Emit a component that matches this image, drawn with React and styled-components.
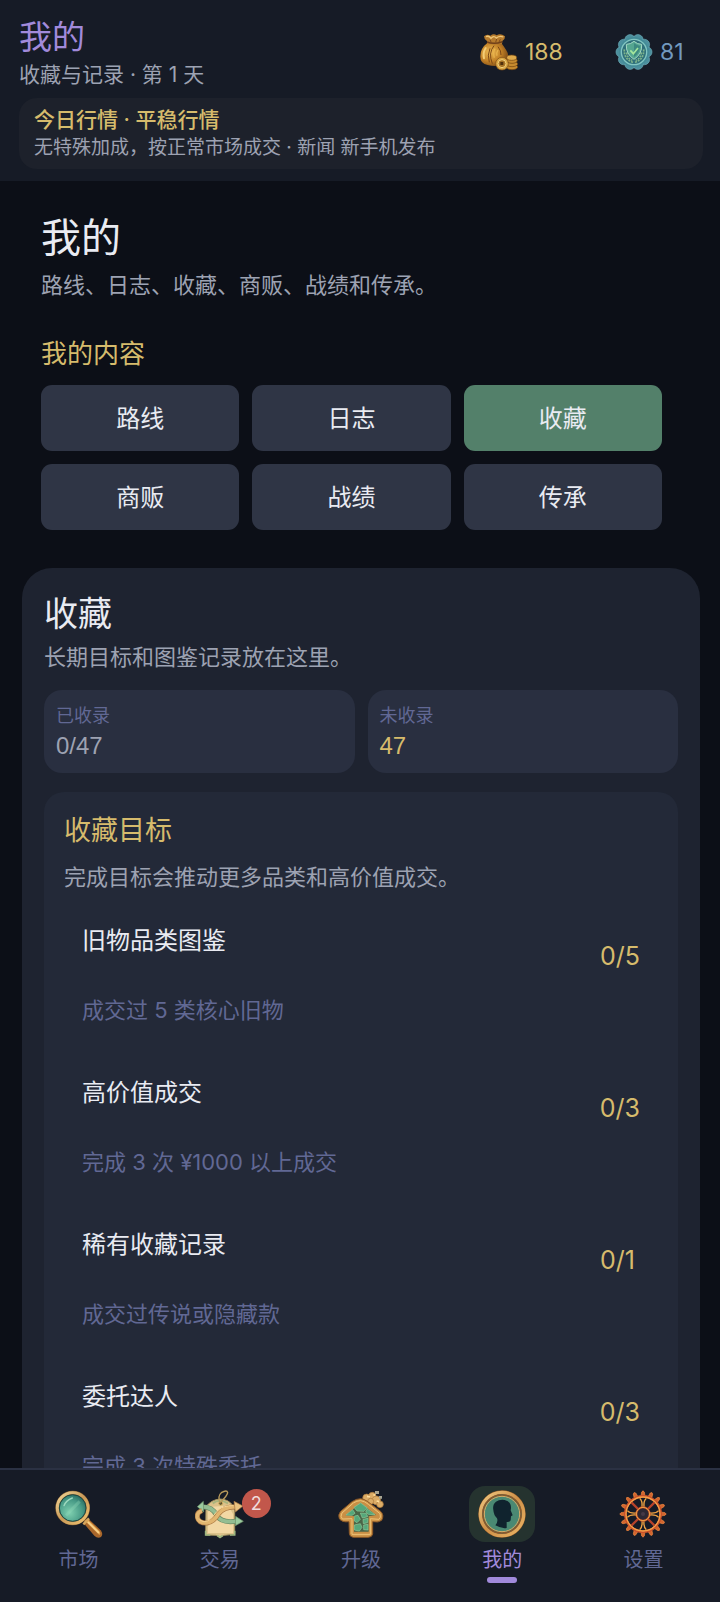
import React, { useState } from "react";
import styled, { createGlobalStyle, css } from "styled-components";

const color = {
  page: "#0c0f17",
  bar: "#161b26",
  banner: "#1d212b",
  card: "#1e2330",
  inner: "#232938",
  tile: "#292f40",
  button: "#2f3545",
  green: "#53806a",
  line: "#2b3143",
  white: "#e9ebf2",
  muted: "#9da2b2",
  dim: "#616894",
  gold: "#d6bb6c",
  blue: "#7299bf",
  purple: "#a18adb",
  red: "#c2574b",
};

const mixedFont = '"Inter", "Noto Sans CJK SC", sans-serif';

const GlobalStyle = createGlobalStyle`
  * { box-sizing: border-box; }
  body {
    margin: 0;
    background: ${color.page};
    color: ${color.white};
    font-family: "Noto Sans CJK SC", "Noto Sans", sans-serif;
  }
  h1, h2, h3, p, ul, dl, dt, dd { margin: 0; padding: 0; font-weight: 400; }
  ul { list-style: none; }
`;

const Shell = styled.div`
  display: flex;
  flex-direction: column;
  height: 100vh;
`;

const Header = styled.header`
  padding: 14px 17px 12px 19px;
  background: ${color.bar};
`;

const HeaderRow = styled.div`
  display: flex;
  justify-content: space-between;
  align-items: flex-start;
`;

const ScreenName = styled.p`
  font-size: 33px;
  line-height: 42px;
  color: ${color.purple};
`;

const ScreenNote = styled.p`
  margin-top: 5px;
  font-family: ${mixedFont};
  font-size: 21px;
  line-height: 28px;
  color: ${color.muted};
`;

const Wallet = styled.div`
  display: flex;
  gap: 12px;
  padding-top: 19px;
`;

const Balance = styled.div`
  display: flex;
  align-items: center;
  gap: 7px;
  min-width: ${(p) => p.$width}px;
  font-family: ${mixedFont};
  font-size: 23px;
  line-height: 38px;
  color: ${(p) => p.$color};
`;

const Banner = styled.section`
  margin-top: 9px;
  padding: 8px 15px 7px;
  border-radius: 18px;
  background: ${color.banner};
  font-family: ${mixedFont};
  font-size: 19px;
  line-height: 28px;
  color: ${color.muted};
`;

const BannerTitle = styled.p`
  font-size: 21px;
  font-weight: 500;
  color: ${color.gold};
`;

const Main = styled.main`
  flex: 1;
  min-height: 0;
  overflow-y: auto;
  scrollbar-width: none;
  padding: 30px 20px 24px 22px;
`;

const Intro = styled.section`
  padding: 0 38px 0 19px;
`;

const PageTitle = styled.h1`
  font-size: 40px;
  line-height: 48px;
`;

const Description = styled.p`
  margin-top: ${(p) => p.$gap}px;
  font-size: 22px;
  line-height: 32px;
  color: ${color.muted};
`;

const SectionLabel = styled.h2`
  margin-top: 35px;
  font-size: 26px;
  line-height: 36px;
  color: ${color.gold};
`;

const TabGrid = styled.div`
  display: grid;
  grid-template-columns: repeat(3, 1fr);
  gap: 13px;
  margin-top: 15px;
`;

const TabButton = styled.button`
  height: 66px;
  padding: 0 0 3px;
  border: 0;
  border-radius: 11px;
  background: ${(p) => (p.$active ? color.green : color.button)};
  color: ${color.white};
  font: inherit;
  font-size: 24px;
  cursor: pointer;
`;

const Card = styled.section`
  margin-top: 38px;
  padding: 22px;
  border-radius: 30px;
  background: ${color.card};
`;

const CardTitle = styled.h2`
  font-size: 34px;
  line-height: 44px;
`;

const Tiles = styled.dl`
  display: grid;
  grid-template-columns: 1fr 1fr;
  gap: 13px;
  margin-top: 19px;
`;

const Tile = styled.div`
  padding: 11px 12px 8px;
  border-radius: 18px;
  background: ${color.tile};
`;

const TileLabel = styled.dt`
  font-size: 18px;
  line-height: 26px;
  color: ${color.dim};
`;

const TileValue = styled.dd`
  font-family: "Liberation Sans", sans-serif;
  font-size: 24px;
  line-height: 38px;
  color: ${(p) => (p.$gold ? color.gold : color.muted)};
`;

const GoalPanel = styled.section`
  margin-top: 19px;
  padding: 19px 20px 20px;
  border-radius: 20px;
  background: ${color.inner};
`;

const GoalHeading = styled.h3`
  font-size: 27px;
  line-height: 36px;
  color: ${color.gold};
`;

const GoalList = styled.ul`
  display: flex;
  flex-direction: column;
  gap: 12px;
  margin-top: 12px;
`;

const GoalRow = styled.li`
  display: flex;
  justify-content: space-between;
  padding: 18px 18px 16px;
`;

const GoalName = styled.p`
  font-size: 24px;
  line-height: 36px;
`;

const GoalHint = styled.p`
  margin-top: 36px;
  font-family: ${mixedFont};
  font-size: 22px;
  line-height: 34px;
  color: ${color.dim};
`;

const GoalCount = styled.span`
  min-width: 40px;
  font-family: ${mixedFont};
  font-size: 25px;
  line-height: 71px;
  color: ${color.gold};
`;

const Nav = styled.nav`
  display: flex;
  padding: 16px 6px 19px 8px;
  border-top: 2px solid ${color.line};
  background: ${color.bar};
`;

const NavItem = styled.a`
  flex: 1;
  display: flex;
  flex-direction: column;
  align-items: center;
  text-decoration: none;
  font-size: 20px;
  line-height: 28px;
  color: ${color.dim};
  ${(p) => p.$active && css`color: ${color.purple};`}
`;

const NavIcon = styled.span`
  position: relative;
  display: flex;
  align-items: center;
  justify-content: center;
  width: 66px;
  height: 56px;
  margin-bottom: 3px;
  border-radius: 16px;
  background: ${(p) => (p.$active ? "#25332f" : "transparent")};
`;

const NavMark = styled.span`
  width: 30px;
  height: 6px;
  margin-top: 4px;
  border-radius: 3px;
  background: ${(p) => (p.$active ? color.purple : "transparent")};
`;

const Badge = styled.span`
  position: absolute;
  top: 3px;
  left: 55px;
  width: 29px;
  height: 29px;
  border-radius: 50%;
  background: ${color.red};
  color: #f0dcdc;
  font-family: ${mixedFont};
  font-size: 18px;
  line-height: 29px;
  text-align: center;
`;

function CoinIcon() {
  return (
    <svg width="38" height="38" viewBox="120 98 114 114" aria-hidden="true">
      <defs>
        <radialGradient id="bag" cx="0.35" cy="0.4" r="0.75">
          <stop offset="0" stopColor="#eebb55" />
          <stop offset="0.55" stopColor="#c07f25" />
          <stop offset="1" stopColor="#6b3d12" />
        </radialGradient>
      </defs>
      <path d="M142 128 Q120 144 121 170 Q121 190 143 194 Q176 202 198 186 Q211 166 198 148 Q190 136 184 128 Z" fill="url(#bag)" />
      <path d="M132 108 Q141 99 151 106 Q161 98 170 105 Q181 98 195 108 Q196 116 187 122 L186 130 Q164 137 141 129 L141 122 Q132 117 132 108Z" fill="#b67b2d" />
      <path d="M138 109 Q147 105 153 114 Q161 104 169 113 Q179 105 190 110" fill="none" stroke="#f0c778" strokeWidth="4" />
      <path d="M141 125 Q163 133 187 124" fill="none" stroke="#71401a" strokeWidth="5" />
      <path d="M150 118 l4 9 M170 116 l-3 10 M181 117 l-4 8" stroke="#7d4a1c" strokeWidth="3" />
      <path d="M137 143 Q128 157 132 174" fill="none" stroke="#f4cd75" strokeWidth="6" strokeLinecap="round" />
      <path d="M162 136 Q144 158 157 190 M174 139 Q184 151 183 164 M150 144 Q141 164 148 186" fill="none" stroke="#7c4816" strokeWidth="3" />
      <path d="M165 145 q-7 13 -2 27 M174 149 q-6 9 -3 17" fill="none" stroke="#e8b24b" strokeWidth="4" />
      <g stroke="#70430f" strokeWidth="2" fill="#c68b2f">
        <ellipse cx="216" cy="200" rx="17" ry="8" />
        <ellipse cx="216" cy="191" rx="17" ry="8" />
        <ellipse cx="216" cy="181" rx="16" ry="8" />
        <ellipse cx="215" cy="172" rx="15" ry="8" fill="#e0aa4a" />
      </g>
      <circle cx="186" cy="190" r="19" fill="#dba744" stroke="#7a4a13" strokeWidth="2" />
      <circle cx="186" cy="190" r="12" fill="#a87426" stroke="#f3d27d" strokeWidth="3" />
      <path d="M181 185 h9 v9 h-9z" fill="#50300d" />
    </svg>
  );
}

function SealIcon() {
  const lobes = Array.from({ length: 10 }, (_, i) => (i * Math.PI) / 5);
  return (
    <svg width="38" height="38" viewBox="525 99 114 114" aria-hidden="true">
      <g fill="#4c8f9d" stroke="#6aabb6" strokeWidth="2">
        {lobes.map((a) => (
          <circle key={a} cx={582 + 38 * Math.cos(a)} cy={156 + 38 * Math.sin(a)} r="16" />
        ))}
      </g>
      <circle cx="582" cy="156" r="45" fill="#438b97" />
      <circle cx="582" cy="156" r="38" fill="#2f6f7a" stroke="#83c6c2" strokeWidth="4" />
      <g fill="none" stroke="#7fb58c" strokeWidth="5" strokeDasharray="6 3">
        <path d="M553 148 Q551 178 579 187" />
        <path d="M611 148 Q613 178 585 187" />
        <path d="M560 157 Q562 176 577 181" />
        <path d="M604 157 Q602 176 587 181" />
      </g>
      <path d="M582 124 Q592 133 605 133 Q607 162 582 178 Q557 162 559 133 Q572 133 582 124Z" fill="#55a690" stroke="#a3d8c4" strokeWidth="3" />
      <path d="M582 130 Q591 137 600 138 Q600 159 582 171Z" fill="#3d8980" />
      <path d="M571 151 L580 161 L594 144" fill="none" stroke="#a5e69c" strokeWidth="5" />
    </svg>
  );
}

function MarketIcon() {
  return (
    <svg width="50" height="50" viewBox="160 147 150 150" aria-hidden="true">
      <defs>
        <radialGradient id="lens" cx="0.4" cy="0.65" r="0.7">
          <stop offset="0" stopColor="#7fd0b0" />
          <stop offset="0.6" stopColor="#469985" />
          <stop offset="1" stopColor="#1d5a55" />
        </radialGradient>
        <linearGradient id="rim" x1="0" y1="0" x2="1" y2="1">
          <stop offset="0" stopColor="#f0d598" />
          <stop offset="0.5" stopColor="#c99a58" />
          <stop offset="1" stopColor="#f0c472" />
        </linearGradient>
      </defs>
      <path d="M251 240 L263 236 L300 271 Q309 282 301 291 Q291 297 281 287 L251 252Z" fill="#a9672b" />
      <path d="M253 243 L262 239 L296 273 Q301 280 296 285" fill="#e3a34f" />
      <path d="M263 247 L293 277" stroke="#f8d28a" strokeWidth="5" strokeLinecap="round" />
      <path d="M248 253 L265 235" stroke="#d7a65c" strokeWidth="7" />
      <circle cx="216" cy="204" r="46" fill="url(#lens)" stroke="#8a6233" strokeWidth="12" />
      <circle cx="216" cy="204" r="46" fill="none" stroke="url(#rim)" strokeWidth="9" />
      <circle cx="216" cy="204" r="40" fill="none" stroke="#1c4742" strokeWidth="3" />
      <path d="M190 197 Q196 181 215 174" fill="none" stroke="#9dd9be" strokeWidth="4" strokeLinecap="round" />
      <path d="M196 226 L237 184" stroke="#90d8b8" strokeWidth="9" opacity="0.35" />
    </svg>
  );
}

function TradeIcon() {
  return (
    <svg width="50" height="50" viewBox="585 147 150 150" aria-hidden="true">
      <path d="M618 200 Q634 179 660 177 Q686 178 698 196 L704 212 V283 L672 286 L660 293 L648 286 L617 285 Z" fill="#dcc28a" stroke="#a08f5e" strokeWidth="3" />
      <path d="M632 200 L685 197 L699 222 V279 H624 V216Z" fill="#f2d8a4" />
      <path d="M617 272 v13 h14 M704 272 v13 h-14 M652 286 l8 6 l8 -6" fill="none" stroke="#9db680" strokeWidth="5" />
      <path d="M638 190 Q658 175 684 190" fill="none" stroke="#aab47c" strokeWidth="6" />
      <circle cx="662" cy="190" r="6" fill="#5b5330" stroke="#dcb967" strokeWidth="3" />
      <path d="M661 190 Q651 169 664 158 Q681 148 683 158 Q682 167 663 185" fill="none" stroke="#b99b5c" strokeWidth="4" />
      <path d="M606 200 Q638 200 650 226 Q664 251 712 243" fill="none" stroke="#6c8b64" strokeWidth="15" />
      <path d="M606 200 Q638 200 650 226 Q664 251 712 243" fill="none" stroke="#93bd92" strokeWidth="11" />
      <path d="M610 184 L592 200 L611 216Z M707 229 L730 244 L706 257Z" fill="#9bcb9f" stroke="#6b8f68" strokeWidth="2" />
      <path d="M606 212 Q590 217 592 232 Q596 250 620 249 Q641 246 655 222 Q671 199 711 200" fill="none" stroke="#a87440" strokeWidth="15" />
      <path d="M606 212 Q590 217 592 232 Q596 250 620 249 Q641 246 655 222 Q671 199 711 200" fill="none" stroke="#e2b670" strokeWidth="11" />
      <path d="M702 184 L729 198 L706 216Z" fill="#e9c280" stroke="#a87440" strokeWidth="2" />
      <path d="M599 239 Q612 250 630 239 L654 211 Q670 196 700 197" fill="none" stroke="#f5d493" strokeWidth="3" />
    </svg>
  );
}

function UpgradeIcon() {
  return (
    <svg width="50" height="50" viewBox="169 147 150 150" aria-hidden="true">
      <g fill="#dcad67" stroke="#a8763a" strokeWidth="2">
        <circle cx="261" cy="174" r="12" />
        <circle cx="278" cy="168" r="11" />
        <circle cx="290" cy="181" r="13" />
        <circle cx="301" cy="193" r="10" />
        <circle cx="273" cy="184" r="9" />
      </g>
      <path d="M286 153 h12 v9 h-12z M298 168 h9 v8 h-9z" fill="#a8a694" />
      <path d="M262 169 l9 2 M281 164 l6 2 M291 183 l8 2" stroke="#ffdf9e" strokeWidth="5" />
      <path d="M243 176 Q253 177 263 184 L304 215 Q314 226 306 241 Q297 249 279 245 L279 282 Q277 292 265 292 L221 292 Q210 291 209 280 L208 245 Q188 248 179 236 Q174 224 183 214 L217 185 Q230 176 243 176Z" fill="#cf9548" stroke="#8a5726" strokeWidth="3" />
      <path d="M243 182 Q256 184 266 193 L301 221 Q305 233 298 238 L272 236 V283 H217 V236 L188 237 Q181 230 187 219 L221 189 Q231 182 243 182Z" fill="#c98f45" stroke="#efc377" strokeWidth="3" />
      <path d="M243 189 L289 225 L267 229 V275 H223 V229 L198 226Z" fill="#4a6548" />
      <g fill="#55a77b" stroke="#8fca98" strokeWidth="2">
        <path d="M223 202 L243 189 L263 204 L253 214 L232 213Z" />
        <path d="M219 209 L226 220 L217 226 L199 225Z" />
        <path d="M263 207 L286 224 L266 223 L258 216Z" />
        <path d="M225 228 L235 226 L242 238 L232 248 L224 243Z" />
        <path d="M242 219 L260 220 L264 230 L248 234Z" />
        <path d="M250 238 L265 235 L264 248 L251 251Z" />
        <path d="M224 255 L242 251 L247 262 L239 273 L224 270Z" />
        <path d="M252 255 L265 253 L265 270 L252 269Z" />
      </g>
    </svg>
  );
}

function ProfileIcon() {
  return (
    <svg width="50" height="50" viewBox="592 147 150 150" aria-hidden="true">
      <defs>
        <linearGradient id="ring" x1="0" y1="0" x2="1" y2="1">
          <stop offset="0" stopColor="#f0c982" />
          <stop offset="0.5" stopColor="#cf9048" />
          <stop offset="1" stopColor="#eab566" />
        </linearGradient>
      </defs>
      <circle cx="667" cy="222" r="65" fill="#457c68" stroke="#8f5826" strokeWidth="12" />
      <circle cx="667" cy="222" r="65" fill="none" stroke="url(#ring)" strokeWidth="10" />
      <circle cx="667" cy="222" r="57" fill="none" stroke="#8c562a" strokeWidth="4" />
      <circle cx="667" cy="222" r="53" fill="#4a8973" stroke="#d6ac67" strokeWidth="3" />
      <path d="M641 210 Q638 193 649 185 Q659 178 675 180 Q694 183 694 204 L693 211 L699 226 L694 229 L693 241 Q690 247 681 246 L681 264 Q667 267 647 256 Q656 246 652 235 Q642 225 641 210Z" fill="#10232e" />
    </svg>
  );
}

function SettingsIcon() {
  const teeth = Array.from({ length: 16 }, (_, i) => i * 22.5);
  const spokes = [0, 45, 90, 135, 180, 225, 270, 315];
  return (
    <svg width="50" height="50" viewBox="235 147 150 150" aria-hidden="true">
      <g>
        {teeth.map((a) => (
          <path key={a} d="M304 169 L306 156 Q310 149 314 156 L316 169Z" fill="#d2652f" stroke="#f0883f" strokeWidth="2" transform={`rotate(${a} 310 222)`} />
        ))}
      </g>
      <circle cx="310" cy="222" r="53" fill="none" stroke="#c9502a" strokeWidth="8" />
      <circle cx="310" cy="222" r="51" fill="none" stroke="#f5a048" strokeWidth="4" />
      {spokes.map((a) => (
        <path
          key={a}
          d={a % 90 ? "M310 174 V202" : "M300 175 Q309 183 307 202 H313 Q311 183 320 175"}
          fill="none"
          stroke={a % 90 ? "#b8432b" : "#f0a443"}
          strokeWidth={a % 90 ? 7 : 4}
          transform={`rotate(${a} 310 222)`}
        />
      ))}
      <circle cx="310" cy="222" r="20" fill="#2c2733" stroke="#b84d29" strokeWidth="6" />
      <circle cx="310" cy="222" r="20" fill="none" stroke="#f0a046" strokeWidth="3" />
      <circle cx="310" cy="222" r="6" fill="#453846" />
    </svg>
  );
}

const tabs = ["路线", "日志", "收藏", "商贩", "战绩", "传承"];

const goals = [
  { name: "旧物品类图鉴", hint: "成交过 5 类核心旧物", count: "0/5" },
  { name: "高价值成交", hint: "完成 3 次 ¥1000 以上成交", count: "0/3" },
  { name: "稀有收藏记录", hint: "成交过传说或隐藏款", count: "0/1" },
  { name: "委托达人", hint: "完成 3 次特殊委托", count: "0/3" },
];

const navItems = [
  { id: "market", label: "市场", Icon: MarketIcon },
  { id: "trade", label: "交易", Icon: TradeIcon, badge: 2 },
  { id: "upgrade", label: "升级", Icon: UpgradeIcon },
  { id: "mine", label: "我的", Icon: ProfileIcon },
  { id: "settings", label: "设置", Icon: SettingsIcon },
];

export default function App() {
  const [tab, setTab] = useState("收藏");
  const current = "mine";

  return (
    <Shell>
      <GlobalStyle />
      <Header>
        <HeaderRow>
          <div>
            <ScreenName>我的</ScreenName>
            <ScreenNote>收藏与记录 · 第 1 天</ScreenNote>
          </div>
          <Wallet>
            <Balance $width={123} $color={color.gold}>
              <CoinIcon />
              188
            </Balance>
            <Balance $width={88} $color={color.blue}>
              <SealIcon />
              81
            </Balance>
          </Wallet>
        </HeaderRow>
        <Banner>
          <BannerTitle>今日行情 · 平稳行情</BannerTitle>
          <p>无特殊加成，按正常市场成交 · 新闻 新手机发布</p>
        </Banner>
      </Header>

      <Main>
        <Intro>
          <PageTitle>我的</PageTitle>
          <Description $gap={8}>路线、日志、收藏、商贩、战绩和传承。</Description>
          <SectionLabel>我的内容</SectionLabel>
          <TabGrid>
            {tabs.map((name) => (
              <TabButton key={name} type="button" $active={name === tab} aria-pressed={name === tab} onClick={() => setTab(name)}>
                {name}
              </TabButton>
            ))}
          </TabGrid>
        </Intro>

        <Card>
          <CardTitle>收藏</CardTitle>
          <Description $gap={5}>长期目标和图鉴记录放在这里。</Description>
          <Tiles>
            <Tile>
              <TileLabel>已收录</TileLabel>
              <TileValue>0/47</TileValue>
            </Tile>
            <Tile>
              <TileLabel>未收录</TileLabel>
              <TileValue $gold>47</TileValue>
            </Tile>
          </Tiles>
          <GoalPanel>
            <GoalHeading>收藏目标</GoalHeading>
            <Description $gap={12}>完成目标会推动更多品类和高价值成交。</Description>
            <GoalList>
              {goals.map((goal) => (
                <GoalRow key={goal.name}>
                  <div>
                    <GoalName>{goal.name}</GoalName>
                    <GoalHint>{goal.hint}</GoalHint>
                  </div>
                  <GoalCount>{goal.count}</GoalCount>
                </GoalRow>
              ))}
            </GoalList>
          </GoalPanel>
        </Card>
      </Main>

      <Nav>
        {navItems.map(({ id, label, Icon, badge }) => (
          <NavItem key={id} href={`#${id}`} $active={id === current} aria-current={id === current ? "page" : undefined}>
            <NavIcon $active={id === current}>
              <Icon />
              {badge && <Badge>{badge}</Badge>}
            </NavIcon>
            {label}
            <NavMark $active={id === current} />
          </NavItem>
        ))}
      </Nav>
    </Shell>
  );
}
